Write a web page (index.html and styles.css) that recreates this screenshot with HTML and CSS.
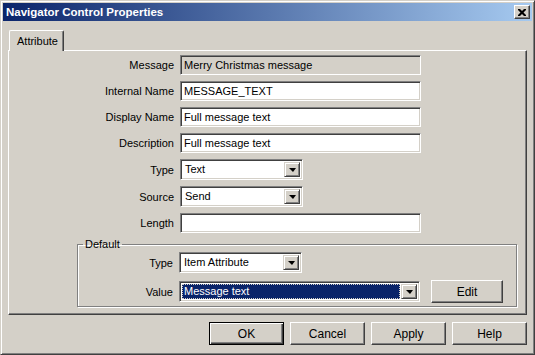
FILE: index.html
```html
<!DOCTYPE html>
<html lang="en">

<head>
    <meta charset="UTF-8">
    <meta name="viewport" content="width=device-width, initial-scale=1.0">
    <title>Navigator Control Properties</title>
    <link rel="stylesheet" href="styles.css">
</head>

<body>
    <div class="window">
        <div class="titlebar">
            <span class="title">Navigator Control Properties</span>
            <div class="close">
                <svg width="8" height="7" viewBox="0 0 8 7">
                    <path d="M0 0h2l2 2 2-2h2v1l-2.5 2.5 2.5 2.5v1h-2l-2-2-2 2h-2v-1l2.5-2.5-2.5-2.5z" fill="#000"/>
                </svg>
            </div>
        </div>
        <div class="client">
            <div class="tabs">
                <div class="tab">Attribute</div>
            </div>
            <div class="panel">
                <div class="form">
                    <label>Message</label>
                    <div class="field disabled">Merry Christmas message</div>
                    <label>Internal Name</label>
                    <div class="field">MESSAGE_TEXT</div>
                    <label>Display Name</label>
                    <div class="field">Full message text</div>
                    <label>Description</label>
                    <div class="field">Full message text</div>
                    <label>Type</label>
                    <div class="combo">
                        <span class="combo-text">Text</span>
                        <span class="drop"><span class="arrow"></span></span>
                    </div>
                    <label>Source</label>
                    <div class="combo">
                        <span class="combo-text">Send</span>
                        <span class="drop"><span class="arrow"></span></span>
                    </div>
                    <label>Length</label>
                    <div class="field"></div>
                </div>
                <fieldset class="group">
                    <legend>Default</legend>
                    <div class="group-form">
                        <label>Type</label>
                        <div class="combo">
                            <span class="combo-text">Item Attribute</span>
                            <span class="drop"><span class="arrow"></span></span>
                        </div>
                        <span></span>
                        <label>Value</label>
                        <div class="combo wide">
                            <span class="combo-text selected">Message text</span>
                            <span class="drop"><span class="arrow"></span></span>
                        </div>
                        <div class="btn edit">Edit</div>
                    </div>
                </fieldset>
            </div>
            <div class="buttons">
                <div class="btn default">OK</div>
                <div class="btn">Cancel</div>
                <div class="btn">Apply</div>
                <div class="btn">Help</div>
            </div>
        </div>
    </div>
</body>

</html>
```
FILE: styles.css
```css
body {
    margin: 0;
    background: #d4d0c8;
    font-family: "Liberation Sans", Arial, sans-serif;
    font-size: 11px;
    color: #000;
}

.window {
    width: 535px;
    height: 355px;
    box-sizing: border-box;
    border: 1px solid;
    border-color: #d4d0c8 #404040 #404040 #d4d0c8;
    box-shadow: inset 1px 1px #fff, inset -1px -1px #808080;
    padding: 2px;
    display: flex;
    flex-direction: column;
}

.titlebar {
    height: 18px;
    display: flex;
    align-items: center;
    justify-content: space-between;
    padding-left: 3px;
    background: linear-gradient(to right, #0a246a, #a6caf0);
}

.title {
    color: #fff;
    font-weight: bold;
    font-size: 11.5px;
}

.close {
    width: 16px;
    height: 14px;
    box-sizing: border-box;
    margin-right: 2px;
    background: #d4d0c8;
    border: 1px solid;
    border-color: #fff #404040 #404040 #fff;
    box-shadow: inset -1px -1px #808080;
    display: flex;
    align-items: center;
    justify-content: center;
}

.client {
    flex: 1;
    display: flex;
    flex-direction: column;
    padding: 0 5px 7px 5px;
}

.tabs {
    display: flex;
    margin-top: 9px;
    padding-left: 1px;
}

.tab {
    position: relative;
    z-index: 1;
    height: 21px;
    box-sizing: border-box;
    margin-bottom: -1px;
    padding: 3px 5px 0 7px;
    background: #d4d0c8;
    border-top: 1px solid #fff;
    border-left: 1px solid #fff;
    border-right: 1px solid #404040;
    box-shadow: inset -1px 0 #808080;
    border-radius: 2px 2px 0 0;
    line-height: 14px;
}

.panel {
    flex: 1;
    border: 1px solid;
    border-color: #fff #404040 #404040 #fff;
    box-shadow: inset -1px -1px #808080;
}

.form {
    display: grid;
    grid-template-columns: 165px 241px;
    column-gap: 6px;
    row-gap: 6px;
    align-items: center;
    padding-top: 4px;
}

label {
    text-align: right;
}

.field {
    height: 20px;
    box-sizing: border-box;
    background: #fff;
    border: 1px solid;
    border-color: #808080 #fff #fff #808080;
    box-shadow: inset 1px 1px #404040, inset -1px -1px #d4d0c8;
    padding: 0 3px;
    line-height: 18px;
    white-space: nowrap;
}

.field.disabled {
    background: #d4d0c8;
}

.combo {
    width: 123px;
    height: 21px;
    box-sizing: border-box;
    background: #fff;
    border: 1px solid;
    border-color: #808080 #fff #fff #808080;
    box-shadow: inset 1px 1px #404040, inset -1px -1px #d4d0c8;
    padding: 2px;
    display: flex;
}

.combo.wide {
    width: 241px;
}

.combo-text {
    flex: 1;
    padding-left: 2px;
    line-height: 15px;
}

.combo-text.selected {
    background: #0a246a;
    color: #fff;
    outline: 1px dotted #d4d0c8;
    outline-offset: -1px;
    margin-right: 1px;
}

.drop {
    width: 16px;
    height: 15px;
    box-sizing: border-box;
    background: #d4d0c8;
    border: 1px solid;
    border-color: #d4d0c8 #404040 #404040 #d4d0c8;
    box-shadow: inset 1px 1px #fff, inset -1px -1px #808080;
    display: flex;
    align-items: center;
    justify-content: center;
}

.arrow {
    width: 0;
    height: 0;
    border-left: 4px solid transparent;
    border-right: 3px solid transparent;
    border-top: 4px solid #000;
    margin-top: 1px;
}

.group {
    margin: 5px 9px 0 68px;
    padding: 1px 0 3px 0;
    border: 1px solid #808080;
    box-shadow: inset 1px 1px #fff, 1px 1px #fff;
}

.group legend {
    padding: 0 2px;
    margin-left: 5px;
    line-height: 13px;
}

.group-form {
    display: grid;
    grid-template-columns: 95px 241px 72px;
    column-gap: 6px;
    row-gap: 7px;
    align-items: center;
}

.group-form .edit {
    margin-left: 5px;
}

.btn {
    width: 75px;
    height: 23px;
    box-sizing: border-box;
    background: #d4d0c8;
    border: 1px solid;
    border-color: #fff #404040 #404040 #fff;
    box-shadow: inset -1px -1px #808080, inset 1px 1px #d4d0c8;
    display: flex;
    align-items: center;
    justify-content: center;
    font-size: 12px;
}

.btn.edit {
    width: 72px;
}

.btn.default {
    border: 1px solid #000;
    box-shadow: inset 1px 1px #fff, inset -1px -1px #404040, inset -2px -2px #808080;
}

.buttons {
    display: flex;
    justify-content: flex-end;
    gap: 6px;
    margin-top: 7px;
}
```
